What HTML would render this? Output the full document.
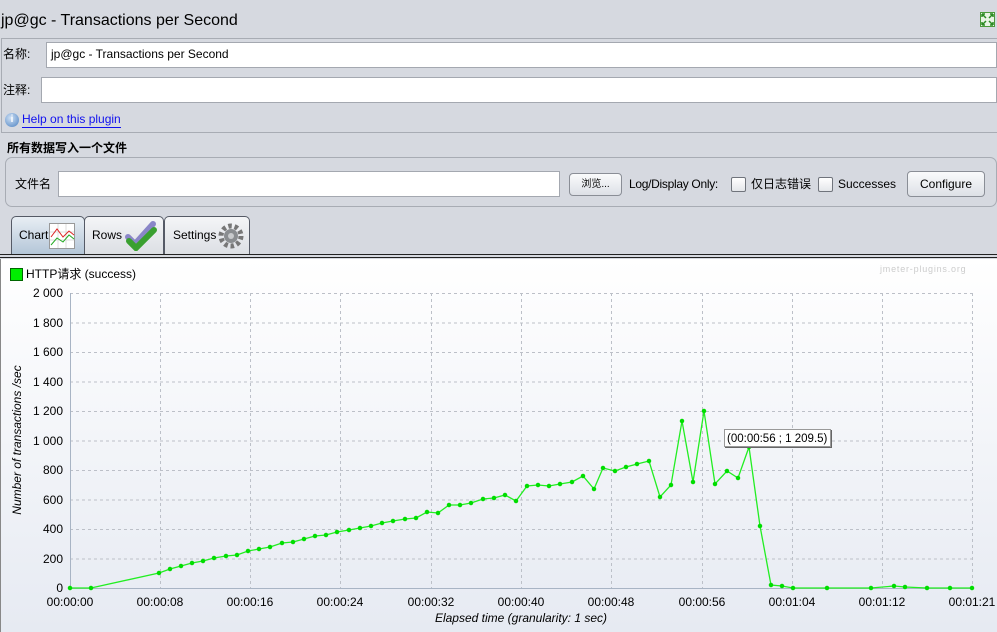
<!DOCTYPE html><html><head><meta charset="utf-8"><style>
body{margin:0;width:997px;height:632px;background:#d6d9e0;font-family:"Liberation Sans","Noto Sans CJK SC",sans-serif;font-size:12px;line-height:15px;color:#000;position:relative;overflow:hidden}
.a{position:absolute;white-space:nowrap}
.inp{position:absolute;background:#fff;border:1px solid #a4a8b0;box-sizing:border-box}
.btn{position:absolute;border:1px solid #8a8e96;border-radius:4px;background:linear-gradient(#fafbfc,#dde0e6);box-sizing:border-box;text-align:center}
.cb{position:absolute;width:13px;height:13px;border:1px solid #70747c;border-radius:2px;background:linear-gradient(#fff,#e4e6ea)}
.tab{position:absolute;top:216px;height:38px;border:1px solid #555a66;border-bottom:none;border-radius:5px 5px 0 0;box-sizing:border-box;background:linear-gradient(#f4f5f7,#dcdfe4)}
</style></head><body>
<div class="a" style="left:1px;top:12px;font-size:16px;line-height:18px">jp@gc - Transactions per Second</div>
<svg class="a" style="left:980px;top:12px" width="15" height="15"><rect x=".5" y=".5" width="14" height="14" fill="#e8f4e4" stroke="#4a9a3a"/><path d="M2 2L6 6M13 2L9 6M2 13L6 9M13 13L9 9M2 2h3M2 2v3M13 2h-3M13 2v3M2 13h3M2 13v-3M13 13h-3M13 13v-3" stroke="#2a8a22" stroke-width="1.5"/></svg>
<div class="a" style="left:1px;top:38px;width:996px;height:95px;border:1px solid #a8acb4;border-right:none;box-sizing:border-box"></div>
<div class="a" style="left:3px;top:47px">名称:</div>
<div class="inp" style="left:46px;top:42px;width:951px;height:26px;padding:4px 4px;font-size:12px">jp@gc - Transactions per Second</div>
<div class="a" style="left:3px;top:83px">注释:</div>
<div class="inp" style="left:41px;top:77px;width:956px;height:26px"></div>
<div class="a" style="left:5px;top:113px;width:14px;height:14px;border-radius:50%;background:radial-gradient(circle at 40% 35%,#cfe1f5,#4b80c0);color:#fff;font-size:10px;text-align:center;line-height:14px;font-weight:bold">i</div>
<div class="a" style="left:22px;top:111px;color:#1010ee;border-bottom:1px solid #1010ee;line-height:16px">Help on this plugin</div>
<div class="a" style="left:7px;top:141px;font-weight:bold">所有数据写入一个文件</div>
<div class="a" style="left:5px;top:157px;width:992px;height:50px;border:1px solid #a8acb4;border-radius:7px;box-sizing:border-box"></div>
<div class="a" style="left:15px;top:177px">文件名</div>
<div class="inp" style="left:58px;top:171px;width:502px;height:26px"></div>
<div class="btn" style="left:569px;top:173px;width:53px;height:23px;font-size:10px;line-height:21px">浏览...</div>
<div class="a" style="left:629px;top:177px;letter-spacing:-0.3px">Log/Display Only:</div>
<div class="cb" style="left:731px;top:177px"></div>
<div class="a" style="left:751px;top:177px">仅日志错误</div>
<div class="cb" style="left:818px;top:177px"></div>
<div class="a" style="left:838px;top:177px">Successes</div>
<div class="btn" style="left:907px;top:171px;width:78px;height:26px;line-height:24px">Configure</div>
<div class="tab" style="left:11px;width:74px;background:linear-gradient(#e8eef4,#b4c6d8)"><span class="a" style="left:7px;top:11px">Chart</span>
<svg class="a" style="left:37px;top:6px" width="26" height="26"><rect x=".5" y=".5" width="25" height="25" fill="#fff" stroke="#999"/><path d="M1 9H25M1 17H25M9 1V25M17 1V25" stroke="#ddd"/><path d="M2 14L8 6L14 14L20 8L25 12" stroke="#d22" fill="none"/><path d="M2 22L8 15L14 19L20 12L25 16" stroke="#2a2" fill="none"/></svg></div>
<div class="tab" style="left:84px;width:80px"><span class="a" style="left:7px;top:11px">Rows</span>
<svg class="a" style="left:40px;top:4px" width="32" height="30"><path d="M3 16L10 23L28 3" stroke="#8a86c8" stroke-width="6" fill="none" stroke-linecap="round"/><path d="M4 20L11 27L29 9" stroke="#3aa030" stroke-width="6" fill="none" stroke-linecap="round"/></svg></div>
<div class="tab" style="left:164px;width:86px"><span class="a" style="left:8px;top:11px">Settings</span>
<svg class="a" style="left:53px;top:6px" width="26" height="26"><circle cx="13" cy="13" r="10" fill="none" stroke="#777" stroke-width="5" stroke-dasharray="3.5 2.8"/><circle cx="13" cy="13" r="7" fill="#8a8d90"/><circle cx="13" cy="13" r="3" fill="#c8cacc"/></svg></div>
<div class="a" style="left:0;top:254px;width:997px;height:2px;border-top:1px solid #222;border-bottom:1px solid #222"></div>
<div class="a" style="left:0;top:259px;width:997px;height:373px;background:linear-gradient(#fff,#e6eaf2);border-left:1px solid #888"></div>
<div class="a" style="left:880px;top:262px;font-size:9px;color:#ccc;letter-spacing:.8px">jmeter-plugins.org</div>
<div class="a" style="left:10px;top:268px;width:11px;height:11px;background:#00ee00;border:1px solid #060"></div>
<div class="a" style="left:26px;top:267px;font-size:12px">HTTP请求 (success)</div>
<svg class="a" style="left:0;top:0" width="997" height="632">
<g stroke="#bcc0c8" stroke-dasharray="3 3" stroke-width="1">
<path d="M70 293.5H972M70 323H972M70 352.5H972M70 382H972M70 411.5H972M70 441H972M70 470.5H972M70 500H972M70 529.5H972M70 559H972"/>
<path d="M160.5 293V588M250.5 293V588M340.5 293V588M431.5 293V588M521.5 293V588M611.5 293V588M702.5 293V588M792.5 293V588M882.5 293V588M972.5 293V588"/>
</g>
<path d="M70.5 293V588.5H972" stroke="#a8b4c4" fill="none"/>
<g font-size="12" text-anchor="end" font-family="Liberation Sans,sans-serif">
<text x="63" y="297">2 000</text><text x="63" y="327">1 800</text><text x="63" y="356">1 600</text><text x="63" y="386">1 400</text><text x="63" y="415">1 200</text><text x="63" y="445">1 000</text><text x="63" y="474">800</text><text x="63" y="504">600</text><text x="63" y="533">400</text><text x="63" y="563">200</text><text x="63" y="592">0</text></g>
<g font-size="12" text-anchor="middle" font-family="Liberation Sans,sans-serif">
<text x="70" y="606">00:00:00</text><text x="160" y="606">00:00:08</text><text x="250" y="606">00:00:16</text><text x="340" y="606">00:00:24</text><text x="431" y="606">00:00:32</text><text x="521" y="606">00:00:40</text><text x="611" y="606">00:00:48</text><text x="702" y="606">00:00:56</text><text x="792" y="606">00:01:04</text><text x="882" y="606">00:01:12</text><text x="972" y="606">00:01:21</text>
<text x="521" y="622" font-style="italic">Elapsed time (granularity: 1 sec)</text>
<text transform="translate(21,440) rotate(-90)" font-style="italic">Number of transactions /sec</text></g>
<polyline fill="none" stroke="#22ee22" stroke-width="1.3" points="70,588 91,588 159,573 170,569 181,566 192,563 203,561 214,558 226,556 237,555 248,551 259,549 270,547 282,543 293,542 304,539 315,536 326,535 337,532 349,530 360,528 371,526 382,523 393,521 405,519 416,518 427,512 438,513 449,505 460,505 471,503 483,499 494,498 505,495 516,501 527,486 538,485 549,486 560,484 572,482 583,476 594,489 603,468 615,471 626,467 637,464 649,461 660,497 671,485 682,421 693,482 704,411 715,484 727,471 738,478 749,447 760,526 771,585 782,586 793,588 827,588 871,588 894,586 905,587 927,588 950,588 972,588"/>
<path stroke="#00dd00" stroke-width="4.5" stroke-linecap="round" d="M70 588h0M91 588h0M159 573h0M170 569h0M181 566h0M192 563h0M203 561h0M214 558h0M226 556h0M237 555h0M248 551h0M259 549h0M270 547h0M282 543h0M293 542h0M304 539h0M315 536h0M326 535h0M337 532h0M349 530h0M360 528h0M371 526h0M382 523h0M393 521h0M405 519h0M416 518h0M427 512h0M438 513h0M449 505h0M460 505h0M471 503h0M483 499h0M494 498h0M505 495h0M516 501h0M527 486h0M538 485h0M549 486h0M560 484h0M572 482h0M583 476h0M594 489h0M603 468h0M615 471h0M626 467h0M637 464h0M649 461h0M660 497h0M671 485h0M682 421h0M693 482h0M704 411h0M715 484h0M727 471h0M738 478h0M749 447h0M760 526h0M771 585h0M782 586h0M793 588h0M827 588h0M871 588h0M894 586h0M905 587h0M927 588h0M950 588h0M972 588h0"/>
<rect x="724.5" y="429.5" width="106" height="17" fill="#fff" stroke="#999"/><path d="M725 447.5H831.5V430" stroke="#666" fill="none"/>
<text x="727" y="442" font-size="11.5" font-family="Liberation Sans,sans-serif">(00:00:56 ; 1 209.5)</text>
</svg>
</body></html>
